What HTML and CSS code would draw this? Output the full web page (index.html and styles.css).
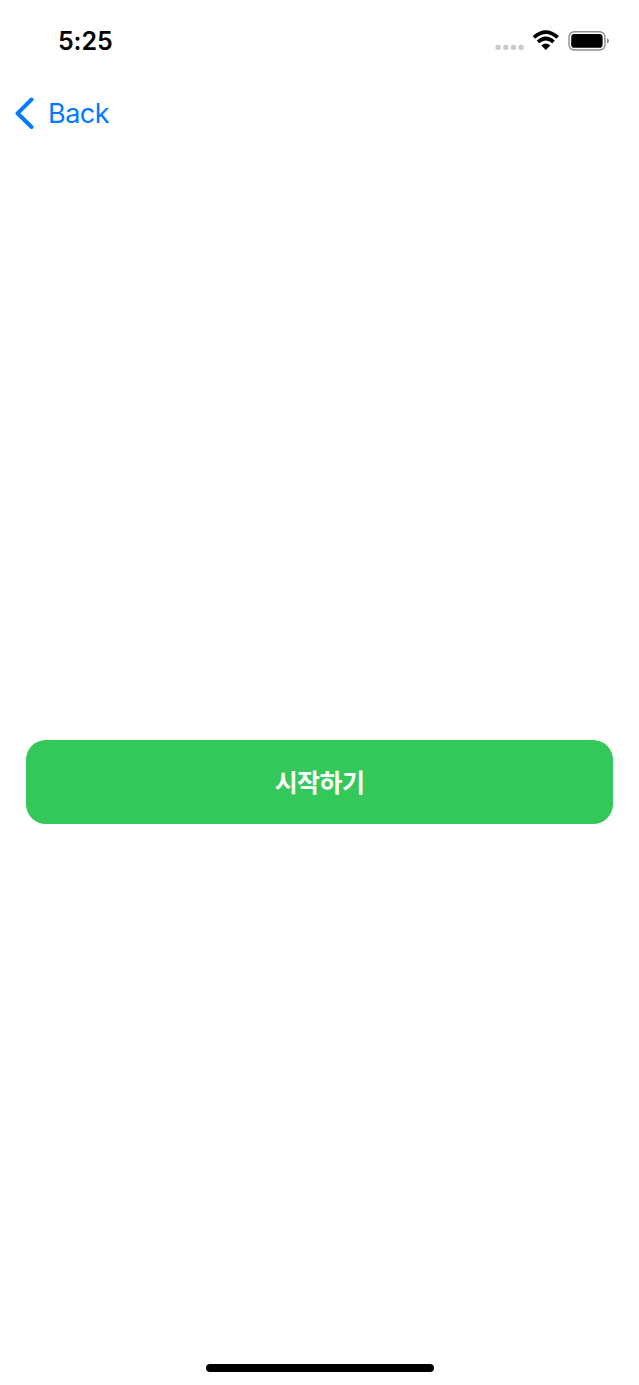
FILE: index.html
```html
<!DOCTYPE html>
<html lang="ko">
<head>
<meta charset="utf-8">
<title>시작하기</title>
<link rel="stylesheet" href="styles.css">
</head>
<body>
<div class="screen">
  <header class="status-bar">
    <span class="time">5:25</span>
    <svg class="status-icons" width="116" height="24" viewBox="494 28 116 24" aria-hidden="true">
      <g fill="#ccc">
        <rect x="495.5" y="44.8" width="5.2" height="5.2" rx="1.8"/>
        <rect x="503.2" y="44.8" width="5.2" height="5.2" rx="1.8"/>
        <rect x="510.9" y="44.8" width="5.2" height="5.2" rx="1.8"/>
        <rect x="518.5" y="44.8" width="5.2" height="5.2" rx="1.8"/>
      </g>
      <g fill="none" stroke="#000" stroke-width="3.7">
        <path d="M533.9 37.3Q545.8 26.9 557.7 37.3"/>
        <path d="M538 41.8Q545.8 35.2 553.6 41.8"/>
      </g>
      <path d="M541.3 45.6Q545.8 41.4 550.3 45.6L545.8 50.1Z"/>
      <rect x="569" y="31.7" width="36" height="18.3" rx="5.3" fill="none" stroke="#8d8d8d" stroke-width="1.4"/>
      <rect x="571.2" y="34" width="31.4" height="13.8" rx="3.1"/>
      <path d="M607 38.2Q609 39 609 40.9Q609 42.8 607 43.6Z" fill="#8d8d8d"/>
    </svg>
  </header>
  <nav class="nav-bar">
    <a class="back">
      <svg width="20" height="32" viewBox="0 0 20 32" aria-hidden="true"><path d="M17.5 2.5L3.5 16.3L17.5 30"/></svg>
      <span class="back-label">Back</span>
    </a>
  </nav>
  <main class="content">
    <button class="start-button">시작하기</button>
  </main>
  <footer class="home-area"><div class="home-indicator"></div></footer>
</div>
</body>
</html>
```

FILE: styles.css
```css
* { box-sizing: border-box; }

body {
  margin: 0;
  background: #fff;
  font-family: Inter, "Noto Sans CJK KR", sans-serif;
}

.screen {
  display: flex;
  flex-direction: column;
  height: 1385px;
  overflow: hidden;
}

.status-bar {
  display: flex;
  justify-content: space-between;
  align-items: flex-start;
  height: 82px;
  padding: 28px 29px 0 58px;
}

.time {
  font-size: 25px;
  font-weight: 600;
  line-height: 27px;
  letter-spacing: -0.1px;
}

.nav-bar {
  height: 63px;
  padding: 15px 14px 0;
}

.back {
  display: inline-flex;
  align-items: center;
  gap: 14px;
  height: 32px;
  color: #007aff;
}

.back path {
  fill: none;
  stroke: currentColor;
  stroke-width: 4;
  stroke-linecap: round;
  stroke-linejoin: round;
}

.back-label {
  padding-top: 2px;
  font-size: 27px;
  line-height: 32px;
  letter-spacing: -0.5px;
}

.content {
  flex: 1;
  display: flex;
  flex-direction: column;
  padding: 595.3px 26.3px 0;
}

.start-button {
  height: 84.2px;
  padding: 0 0 3px;
  border: 0;
  border-radius: 20px;
  background: #34c759;
  color: #fff;
  font: 700 25px/36px "Noto Sans CJK KR", sans-serif;
  letter-spacing: -0.6px;
}

.home-area {
  display: flex;
  justify-content: center;
  height: 21px;
  padding-left: 1px;
}

.home-indicator {
  width: 228px;
  height: 8px;
  border-radius: 4px;
  background: #000;
}
```
